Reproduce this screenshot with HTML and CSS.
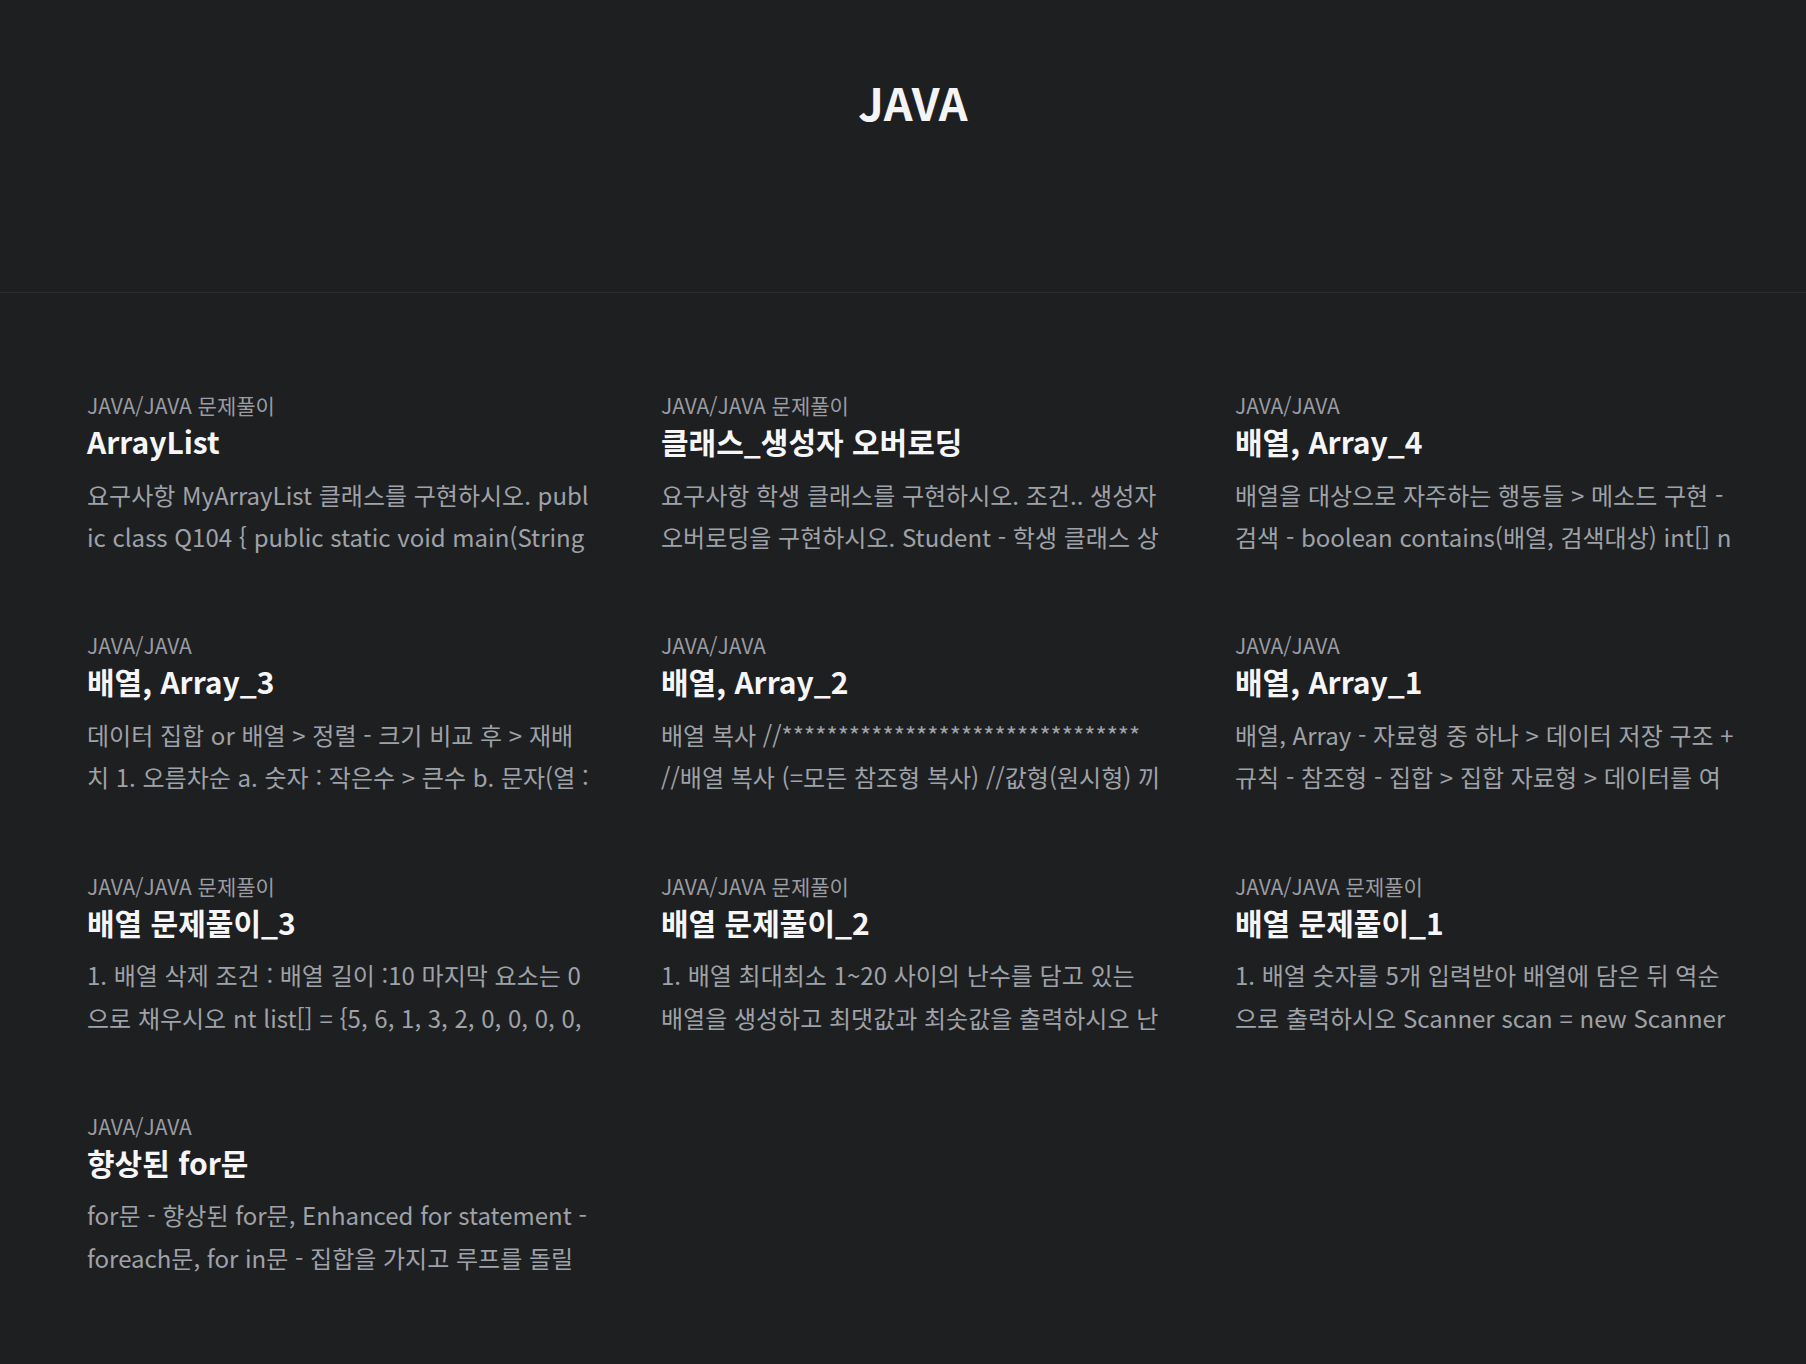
FILE: index.html
```html
<!DOCTYPE html>
<html lang="ko">
<head>
<meta charset="utf-8">
<title>JAVA</title>
<link rel="stylesheet" href="styles.css">
</head>
<body>
<header class="hero">
  <h1 class="hero-title">JAVA</h1>
</header>
<main class="posts">
  <article class="post">
    <div class="post-cat">JAVA/JAVA 문제풀이</div>
    <h2 class="post-title">ArrayList</h2>
    <p class="post-desc">요구사항 MyArrayList 클래스를 구현하시오. public class Q104 { public static void main(String[] args) { MyArrayList list = new MyArrayList(); list.add("홍길동"); } }</p>
  </article>
  <article class="post">
    <div class="post-cat">JAVA/JAVA 문제풀이</div>
    <h2 class="post-title">클래스_생성자 오버로딩</h2>
    <p class="post-desc">요구사항 학생 클래스를 구현하시오. 조건.. 생성자 오버로딩을 구현하시오. Student - 학생 클래스 상태 - 이름, 나이, 학년, 반, 번호</p>
  </article>
  <article class="post">
    <div class="post-cat">JAVA/JAVA</div>
    <h2 class="post-title">배열, Array_4</h2>
    <p class="post-desc">배열을 대상으로 자주하는 행동들 &gt; 메소드 구현 - 검색 - boolean contains(배열, 검색대상) int[] nums = { 10, 20, 30 };</p>
  </article>
  <article class="post">
    <div class="post-cat">JAVA/JAVA</div>
    <h2 class="post-title">배열, Array_3</h2>
    <p class="post-desc">데이터 집합 or 배열 &gt; 정렬 - 크기 비교 후 &gt; 재배치 1. 오름차순 a. 숫자 : 작은수 &gt; 큰수 b. 문자(열 : 문자코드값 비교</p>
  </article>
  <article class="post">
    <div class="post-cat">JAVA/JAVA</div>
    <h2 class="post-title">배열, Array_2</h2>
    <p class="post-desc">배열 복사 //********************************<br>//배열 복사 (=모든 참조형 복사) //값형(원시형) 끼리의 복사</p>
  </article>
  <article class="post">
    <div class="post-cat">JAVA/JAVA</div>
    <h2 class="post-title">배열, Array_1</h2>
    <p class="post-desc">배열, Array - 자료형 중 하나 &gt; 데이터 저장 구조 + 규칙 - 참조형 - 집합 &gt; 집합 자료형 &gt; 데이터를 여러개 저장</p>
  </article>
  <article class="post">
    <div class="post-cat">JAVA/JAVA 문제풀이</div>
    <h2 class="post-title">배열 문제풀이_3</h2>
    <p class="post-desc">1. 배열 삭제 조건 : 배열 길이 :10 마지막 요소는 0으로 채우시오 nt list[] = {5, 6, 1, 3, 2, 0, 0, 0, 0, 0};</p>
  </article>
  <article class="post">
    <div class="post-cat">JAVA/JAVA 문제풀이</div>
    <h2 class="post-title">배열 문제풀이_2</h2>
    <p class="post-desc">1. 배열 최대최소 1~20 사이의 난수를 담고 있는 배열을 생성하고 최댓값과 최솟값을 출력하시오 난수 : 1, 5, 8</p>
  </article>
  <article class="post">
    <div class="post-cat">JAVA/JAVA 문제풀이</div>
    <h2 class="post-title">배열 문제풀이_1</h2>
    <p class="post-desc">1. 배열 숫자를 5개 입력받아 배열에 담은 뒤 역순으로 출력하시오 Scanner scan = new Scanner(System.in);</p>
  </article>
  <article class="post">
    <div class="post-cat">JAVA/JAVA</div>
    <h2 class="post-title">향상된 for문</h2>
    <p class="post-desc">for문 - 향상된 for문, Enhanced for statement - foreach문, for in문 - 집합을 가지고 루프를 돌릴 때 사용</p>
  </article>
</main>
</body>
</html>
```
FILE: styles.css
```css
html, body {
  margin: 0;
  padding: 0;
}
body {
  background: #1e1f21;
  color: #f4f4f6;
  font-family: "Noto Sans CJK KR", "Noto Sans", sans-serif;
  min-height: 1364px;
}
.hero {
  height: 293px;
  border-bottom: 1px solid #2a2b2e;
  display: flex;
  justify-content: center;
  box-sizing: border-box;
  padding: 70px 0 0 20px;
}
.hero-title {
  margin: 0;
  font-size: 45px;
  line-height: 64px;
  font-weight: 700;
  color: #f4f4f6;
}
.posts {
  display: grid;
  grid-template-columns: repeat(3, 502px);
  column-gap: 72px;
  row-gap: 71.8px;
  padding: 97px 0 80px 87px;
}
.post {
  min-width: 0;
}
.post-cat {
  font-size: 21px;
  line-height: 30px;
  color: #9a9ca1;
}
.post-title {
  margin: 1px 0 0;
  font-size: 30px;
  line-height: 40px;
  font-weight: 700;
  color: #f6f6f8;
}
.post-desc {
  margin: 12.5px 0 0;
  font-size: 24px;
  line-height: 42.5px;
  max-height: 85px;
  overflow: hidden;
  word-break: break-all;
  color: #9fa2a8;
}
```
